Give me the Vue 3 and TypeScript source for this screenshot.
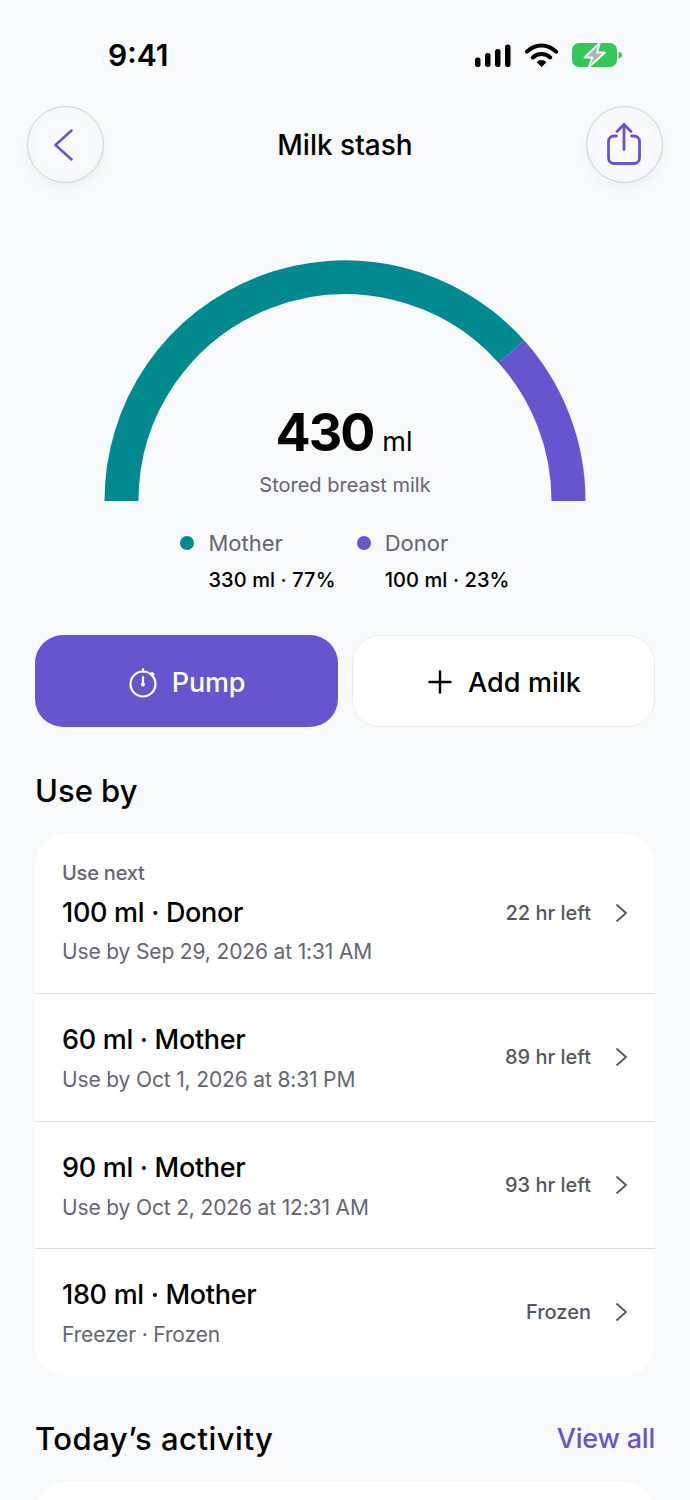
<script setup lang="ts">
interface Row { next?: boolean; title: string; sub: string; right: string }
const rows: Row[] = [
  { next: true, title: '100 ml · Donor', sub: 'Use by Sep 29, 2026 at 1:31 AM', right: '22 hr left' },
  { title: '60 ml · Mother', sub: 'Use by Oct 1, 2026 at 8:31 PM', right: '89 hr left' },
  { title: '90 ml · Mother', sub: 'Use by Oct 2, 2026 at 12:31 AM', right: '93 hr left' },
  { title: '180 ml · Mother', sub: 'Freezer · Frozen', right: 'Frozen' },
]
</script>

<template>
  <div class="page">
    <div class="status">
      <span class="time">9:41</span>
      <div class="status-icons">
        <svg width="36" height="24" viewBox="0 0 36 24"><g fill="#000"><rect x="0" y="14.500" width="5.500" height="9.500" rx="2.500"/><rect x="10" y="10" width="5.500" height="14" rx="2.500"/><rect x="20" y="6" width="5.500" height="18" rx="2.500"/><rect x="30" y="1.500" width="5.500" height="22.500" rx="2.500"/></g></svg>
        <svg width="33" height="26" viewBox="0 0 34 26"><g fill="none" stroke="#000" stroke-width="4.200" stroke-linecap="round"><path d="M2 9.500C10.500 1 23.500 1 32 9.500"/><path d="M8 15.500C13 10.700 21 10.700 26 15.500"/></g><path d="M12.500 20.500C15 18 19 18 21.500 20.500L17 25Z" fill="#000" stroke="#000" stroke-linejoin="round"/></svg>
        <svg width="50" height="24" viewBox="0 0 50 24"><rect x="0" y="0" width="45" height="24" rx="7" fill="#34c759"/><path d="M46.500 8.500C48.500 9 50 10.300 50 12S48.500 15 46.500 15.500Z" fill="#34c759"/><path d="M28 -0.500 12.500 14.500H20.500L16.500 24.500 33 9.500H25Z" fill="#b0b3b0" stroke="#f8f9fb" stroke-width="1.800" stroke-linejoin="round"/></svg>
      </div>
    </div>

    <header class="nav">
      <button class="circle" aria-label="Back">
        <svg class="back-icon" width="20" height="32" viewBox="0 0 20 32"><path d="M18.500 1.500 2.500 16l16 14.500" fill="none" stroke="#6655cf" stroke-width="2.500" stroke-linecap="round" stroke-linejoin="round"/></svg>
      </button>
      <h1 class="nav-title">Milk stash</h1>
      <button class="circle" aria-label="Share">
        <svg width="34" height="44" viewBox="0 0 34 44"><g fill="none" stroke="#6655cf" stroke-width="2.800" stroke-linecap="round" stroke-linejoin="round"><path d="M9.500 13H7a5.500 5.500 0 0 0-5.500 5.500V35A5.500 5.500 0 0 0 7 40.500h20a5.500 5.500 0 0 0 5.500-5.500V18.500A5.500 5.500 0 0 0 27 13h-2.500"/><path d="M17 26.500V1.500"/><path d="M10 8.500 17 1.500l7 7"/></g></svg>
      </button>
    </header>

    <section class="gauge">
      <svg class="arc" width="482" height="241" viewBox="104 260 482 241">
        <path d="M121.500 501A223.500 223.500 0 0 1 511.400 351.600" fill="none" stroke="#008a8f" stroke-width="34"/>
        <path d="M511.400 351.600A223.500 223.500 0 0 1 568.500 501" fill="none" stroke="#6755cf" stroke-width="34"/>
      </svg>
      <div class="gauge-center">
        <div class="amount"><span class="num">430</span><span class="unit">ml</span></div>
        <div class="gauge-label">Stored breast milk</div>
      </div>
    </section>

    <div class="legend">
      <div class="legend-item">
        <span class="dot teal"></span><span class="legend-name">Mother</span>
        <span></span><span class="legend-val">330 ml · 77%</span>
      </div>
      <div class="legend-item">
        <span class="dot purple"></span><span class="legend-name">Donor</span>
        <span></span><span class="legend-val">100 ml · 23%</span>
      </div>
    </div>

    <div class="actions">
      <button class="action primary">
        <svg width="30" height="32" viewBox="0 0 30 32"><g fill="none" stroke="#fff" stroke-width="2.200" stroke-linecap="round"><circle cx="15" cy="18" r="12.500"/><path d="M15 3v2.500"/><path d="M24 7l1.500 1.500"/><path d="M15 11v7"/></g><circle cx="15" cy="18.500" r="2" fill="#fff"/></svg>
        Pump
      </button>
      <button class="action secondary">
        <svg width="24" height="24" viewBox="0 0 24 24"><path d="M12 1.500v21M1.500 12h21" stroke="#000" stroke-width="2.400" stroke-linecap="round"/></svg>
        Add milk
      </button>
    </div>

    <h2 class="section-title useby">Use by</h2>

    <div class="card">
      <div v-for="r in rows" :key="r.title" class="row" :class="{ first: r.next }">
        <div class="row-main">
          <div v-if="r.next" class="next">Use next</div>
          <div class="row-title">{{ r.title }}</div>
          <div class="row-sub">{{ r.sub }}</div>
        </div>
        <span class="row-right">{{ r.right }}</span>
        <svg class="chev" width="13" height="20" viewBox="0 0 13 20"><path d="M2 2l9 8-9 8" fill="none" stroke="#55565f" stroke-width="1.800" stroke-linecap="round" stroke-linejoin="round"/></svg>
      </div>
    </div>

    <div class="activity-head">
      <h2 class="section-title activity-title">Today’s activity</h2>
      <a class="view-all">View all</a>
    </div>
    <div class="card stub"></div>
  </div>
</template>

<style>
html, body { margin: 0; background: #f8f9fb; }
</style>

<style scoped>
.page {
  width: 690px;
  height: 1500px;
  overflow: hidden;
  background: #f8f9fb;
  font-family: Inter, "Noto Sans", sans-serif;
  color: #000;
  box-sizing: border-box;
}
.status {
  height: 106px;
  display: flex;
  justify-content: space-between;
  align-items: flex-start;
  padding: 37px 68px 0 108px;
  box-sizing: border-box;
}
.time { font-size: 30px; line-height: 36px; font-weight: 600; }
.status-icons { display: flex; align-items: center; gap: 14px; height: 36px; }
.nav {
  display: flex;
  justify-content: space-between;
  align-items: center;
  padding: 0 27px;
}
.circle {
  width: 77px;
  height: 77px;
  border-radius: 50%;
  border: 1px solid #cfcfd3;
  background: #f8f9fb;
  box-shadow: inset 0 0 16px rgba(0,0,0,0.025), 0 6px 14px rgba(0,0,0,0.035);
  display: flex;
  align-items: center;
  justify-content: center;
  padding: 0;
  box-sizing: border-box;
}
.back-icon { margin-right: 6px; }
.nav-title { margin: 0; font-size: 28px; font-weight: 500; line-height: 34px; }
.gauge {
  position: relative;
  width: 482px;
  height: 241px;
  margin: 77px auto 0 104px;
}
.arc { display: block; }
.gauge-center {
  position: absolute;
  left: 0;
  right: 0;
  bottom: 0;
  text-align: center;
}
.amount { display: flex; align-items: baseline; justify-content: center; gap: 9px; line-height: 64px; margin-right: 2px; }
.num { font-size: 52px; font-weight: 700; letter-spacing: -2px; }
.unit { font-size: 27px; font-weight: 400; letter-spacing: 0; }
.gauge-label { color: #65666f; font-size: 20px; line-height: 28px; margin-top: -3px; margin-bottom: 2px; letter-spacing: 0; }
.legend {
  display: flex;
  gap: 21px;
  justify-content: center;
  margin-top: 27px;
}
.legend-item {
  display: grid;
  grid-template-columns: 14px auto;
  column-gap: 14px;
  row-gap: 7px;
  align-items: center;
}
.dot { width: 14px; height: 14px; border-radius: 50%; }
.teal { background: #008a8f; }
.purple { background: #6755cf; }
.legend-name { color: #65666f; font-size: 22px; line-height: 30px; }
.legend-val { font-size: 20px; font-weight: 500; line-height: 30px; letter-spacing: 0.1px; }
.actions {
  display: grid;
  grid-template-columns: 303px 303px;
  gap: 14px;
  margin: 40px 35px 0;
}
.action {
  height: 92px;
  border-radius: 28px;
  display: flex;
  align-items: center;
  justify-content: center;
  gap: 14px;
  font-family: inherit;
  font-size: 27px;
  font-weight: 500;
  letter-spacing: -0.2px;
  padding: 2px 0 0;
  box-sizing: border-box;
}
.primary { background: #6755cf; color: #fff; border: none; }
.secondary { background: #fff; color: #000; border: 1px solid #ececef; letter-spacing: 0.1px; gap: 16px; padding-left: 2px; }
.section-title { margin: 0; font-size: 31px; font-weight: 500; line-height: 40px; letter-spacing: 0; }
.activity-title { letter-spacing: 0.5px; }
.useby { margin: 44px 35px 22px; }
.card {
  margin: 0 35px;
  background: #fff;
  border-radius: 32px;
  overflow: hidden;
}
.row {
  display: flex;
  align-items: center;
  height: 127.500px;
  padding: 0 27px;
  box-sizing: border-box;
  border-top: 1px solid #dfdfe2;
}
.row.first { height: 160px; border-top: none; }
.row-main { flex: 1; padding-top: 3px; }
.row.first .row-main { padding-top: 0; }
.next { color: #65666f; font-size: 20px; font-weight: 500; line-height: 26px; letter-spacing: -0.2px; margin-bottom: 10px; }
.row-title { font-size: 27px; font-weight: 500; line-height: 34px; letter-spacing: -0.3px; }
.row-sub { color: #65666f; font-size: 21px; line-height: 28px; margin-top: 9px; letter-spacing: -0.15px; }
.row.first .row-sub { margin-top: 8px; }
.row-right { color: #55565f; font-size: 20px; font-weight: 500; letter-spacing: 0; margin-right: 24px; }
.chev { flex: none; }
.activity-head {
  display: flex;
  justify-content: space-between;
  align-items: center;
  margin: 43px 35px 22px;
}
.view-all { color: #6755cf; font-size: 27px; font-weight: 500; letter-spacing: -0.2px; }
.stub { height: 100px; }
</style>
